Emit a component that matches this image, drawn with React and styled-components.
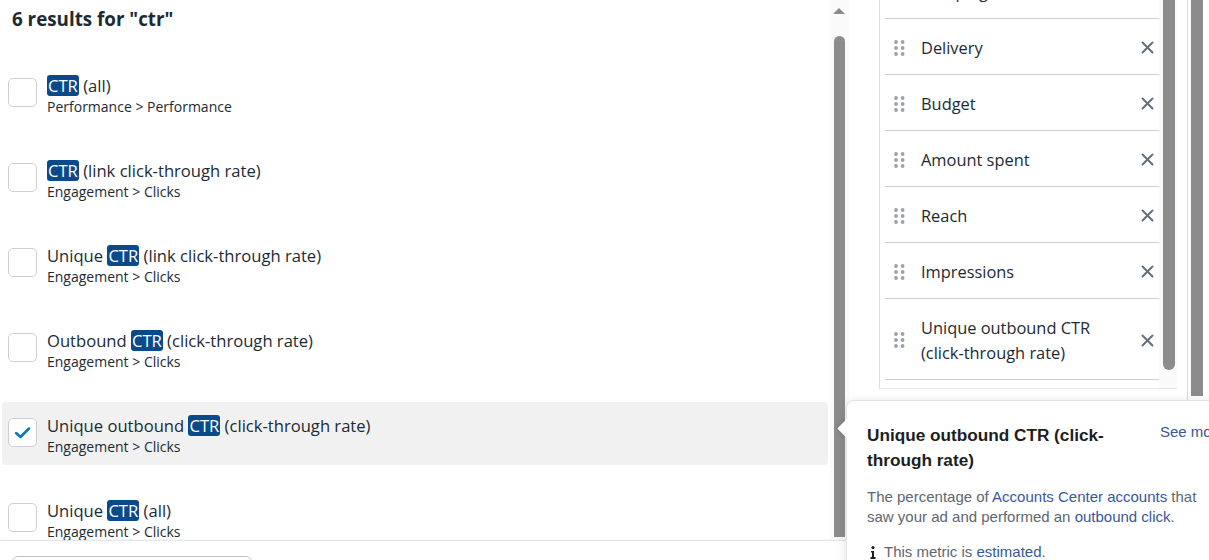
import styled, { createGlobalStyle } from "styled-components";

const GlobalStyle = createGlobalStyle`
  html, body {
    margin: 0;
    padding: 0;
    background: #fff;
    overflow: hidden;
  }
  body {
    font-family: "Open Sans", "Noto Sans", sans-serif;
    color: #1c2b33;
  }
`;

const results = [
  { pre: "", post: " (all)", path: "Performance > Performance" },
  { pre: "", post: " (link click-through rate)", path: "Engagement > Clicks" },
  { pre: "Unique ", post: " (link click-through rate)", path: "Engagement > Clicks" },
  { pre: "Outbound ", post: " (click-through rate)", path: "Engagement > Clicks" },
  { pre: "Unique outbound ", post: " (click-through rate)", path: "Engagement > Clicks", checked: true },
  { pre: "Unique ", post: " (all)", path: "Engagement > Clicks" },
];

const columns = [
  "Campaign name",
  "Delivery",
  "Budget",
  "Amount spent",
  "Reach",
  "Impressions",
  "Unique outbound CTR (click-through rate)",
];

function DragHandle() {
  return (
    <svg width="11" height="16" viewBox="0 0 11 16">
      {[2, 8, 14].map((cy) => (
        <g key={cy} fill="#9ba1a9">
          <circle cx="2" cy={cy} r="1.9" />
          <circle cx="8.6" cy={cy} r="1.9" />
        </g>
      ))}
    </svg>
  );
}

function CloseIcon() {
  return (
    <svg width="13" height="13" viewBox="0 0 13 13">
      <path d="M1.5 1.5 L11.5 11.5 M11.5 1.5 L1.5 11.5" stroke="#65707a" strokeWidth="2" strokeLinecap="round" />
    </svg>
  );
}

function CheckIcon() {
  return (
    <svg width="17" height="13" viewBox="0 0 17 13">
      <path d="M2 7 L6.5 11 L15 2.5" fill="none" stroke="#0a78be" strokeWidth="2.5" strokeLinecap="round" strokeLinejoin="round" />
    </svg>
  );
}

function InfoGlyph() {
  return (
    <svg width="6" height="13" viewBox="0 0 6 13">
      <circle cx="3" cy="1.6" r="1.6" fill="#1c1e21" />
      <path d="M1 5 H4 V11 H5.5 V13 H0.5 V11 H2 V6.6 H1 Z" fill="#1c1e21" />
    </svg>
  );
}

export default function App() {
  return (
    <>
      <GlobalStyle />
      <Page>
        <LeftPanel>
          <LeftBody>
            <ResultsColumn>
              <Heading>6 results for "ctr"</Heading>
              <ResultList>
                {results.map((r, i) => (
                  <ResultRow key={i} $selected={r.checked}>
                    <Checkbox>{r.checked && <CheckIcon />}</Checkbox>
                    <ResultText>
                      <ResultTitle>
                        {r.pre}
                        <Match>CTR</Match>
                        {r.post}
                      </ResultTitle>
                      <ResultPath>{r.path}</ResultPath>
                    </ResultText>
                  </ResultRow>
                ))}
              </ResultList>
            </ResultsColumn>
            <ScrollTrack>
              <ScrollArrow />
              <ScrollThumb $top={36} $bottom={3} />
            </ScrollTrack>
          </LeftBody>
          <Footer>
            <OutlineButton />
          </Footer>
        </LeftPanel>

        <RightPanel>
          <ColumnBox>
            <ColumnList>
              {columns.map((c) => (
                <ColumnRow key={c}>
                  <HandleCell>
                    <DragHandle />
                  </HandleCell>
                  <ColumnName>{c}</ColumnName>
                  <RemoveButton>
                    <CloseIcon />
                  </RemoveButton>
                </ColumnRow>
              ))}
            </ColumnList>
            <ListTrack>
              <ListThumb />
            </ListTrack>
          </ColumnBox>
          <OuterDivider />
          <OuterThumb />
        </RightPanel>

        <Popover>
          <PopoverArrow />
          <PopoverHeader>
            <PopoverTitle>Unique outbound CTR (click-through rate)</PopoverTitle>
            <Link>See more</Link>
          </PopoverHeader>
          <PopoverBody>
            The percentage of <Link>Accounts Center accounts</Link> that saw your ad and
            performed an <Link>outbound click</Link>.
          </PopoverBody>
          <InfoLine>
            <InfoGlyph />
            <span>
              This metric is <Link>estimated</Link>.
            </span>
          </InfoLine>
        </Popover>
      </Page>
    </>
  );
}

const Page = styled.div`
  position: relative;
  display: flex;
  width: 1209px;
  height: 560px;
  overflow: hidden;
`;

const LeftPanel = styled.div`
  width: 849px;
  display: flex;
  flex-direction: column;
  height: 560px;
`;

const LeftBody = styled.div`
  flex: 1;
  display: flex;
  min-height: 0;
  overflow: hidden;
`;

const ResultsColumn = styled.div`
  width: 828px;
  padding-left: 2px;
  overflow: hidden;
`;

const Heading = styled.h2`
  margin: 0 0 31px;
  padding: 7px 0 0 10px;
  font-size: 18.8px;
  line-height: 24px;
  font-weight: 700;
  color: #1c2b33;
`;

const ResultList = styled.div`
  display: flex;
  flex-direction: column;
  gap: 22px;
`;

const ResultRow = styled.div`
  display: flex;
  align-items: flex-start;
  gap: 10px;
  height: 63px;
  box-sizing: border-box;
  padding: 13px 6px 0;
  border-radius: 4px;
  background: ${(p) => (p.$selected ? "#f1f1f1" : "transparent")};
`;

const Checkbox = styled.div`
  width: 29px;
  height: 29px;
  margin-top: 3px;
  box-sizing: border-box;
  border: 1px solid #ccd0d5;
  border-radius: 5px;
  background: #fff;
  display: flex;
  align-items: center;
  justify-content: center;
  flex-shrink: 0;
`;

const ResultText = styled.div`
  display: flex;
  flex-direction: column;
`;

const ResultTitle = styled.div`
  font-size: 16.6px;
  line-height: 22px;
  color: #1c2b33;
  white-space: nowrap;
`;

const Match = styled.span`
  display: inline-block;
  background: #0b4a8a;
  color: #fff;
  border-radius: 3px;
  padding: 0 1px;
  line-height: 21px;
`;

const ResultPath = styled.div`
  font-size: 14px;
  line-height: 20px;
  color: #1c2b33;
`;

const ScrollTrack = styled.div`
  width: 19px;
  margin-left: 2px;
  background: #fafafa;
  display: flex;
  flex-direction: column;
  align-items: center;
  padding-top: 8px;
  box-sizing: border-box;
`;

const ScrollArrow = styled.div`
  width: 0;
  height: 0;
  border-left: 6px solid transparent;
  border-right: 6px solid transparent;
  border-bottom: 6px solid #8c8c8c;
  margin-left: -1px;
`;

const ScrollThumb = styled.div`
  width: 11px;
  flex: 1;
  margin: ${(p) => p.$top - 14}px 0 ${(p) => p.$bottom}px -1px;
  background: #8c8c8c;
  border-radius: 6px 6px 0 0;
`;

const Footer = styled.div`
  height: 20px;
  border-top: 1px solid #e4e6eb;
  box-shadow: 0 -1px 3px rgba(0, 0, 0, 0.04);
  padding: 15px 0 0 12px;
  box-sizing: border-box;
  background: #fff;
`;

const OutlineButton = styled.div`
  width: 240px;
  height: 36px;
  box-sizing: border-box;
  border: 1px solid #bec3c9;
  border-radius: 6px;
`;

const RightPanel = styled.div`
  flex: 1;
  display: flex;
  align-items: flex-start;
  padding-left: 30px;
`;

const ColumnBox = styled.div`
  display: flex;
  width: 298px;
  height: 389px;
  border-left: 1px solid #dadde1;
  border-bottom: 1px solid #e4e6eb;
  box-sizing: border-box;
  overflow: hidden;
`;

const ColumnList = styled.div`
  width: 275px;
  padding-left: 5px;
  margin-top: -37px;
`;

const ColumnRow = styled.div`
  display: flex;
  align-items: center;
  min-height: 56px;
  padding: 16px 0 14px;
  box-sizing: border-box;
  border-bottom: 1px solid #ccd0d5;
`;

const HandleCell = styled.div`
  width: 36px;
  display: flex;
  padding-left: 9px;
  box-sizing: border-box;
  flex-shrink: 0;
`;

const ColumnName = styled.div`
  flex: 1;
  font-size: 16.4px;
  line-height: 25px;
  color: #1c2b33;
  padding-right: 20px;
`;

const RemoveButton = styled.div`
  width: 13px;
  display: flex;
  margin-right: 5px;
  flex-shrink: 0;
`;

const ListTrack = styled.div`
  width: 18px;
  background: #fafafa;
  display: flex;
  justify-content: center;
`;

const ListThumb = styled.div`
  width: 12px;
  height: 370px;
  background: #8c8c8c;
  border-radius: 0 0 6px 6px;
  margin-left: 2px;
`;

const OuterDivider = styled.div`
  width: 1px;
  height: 400px;
  background: #dadde1;
  margin-left: 10px;
`;

const OuterThumb = styled.div`
  width: 12px;
  height: 396px;
  background: #8c8c8c;
  margin-left: 3px;
`;

const Popover = styled.div`
  position: absolute;
  left: 846px;
  top: 400px;
  width: 400px;
  height: 200px;
  box-sizing: border-box;
  padding: 22px 20px 0;
  background: #fff;
  border: 1px solid #e1e3e6;
  border-radius: 8px;
  box-shadow: 0 2px 12px rgba(0, 0, 0, 0.12);
  font-family: "Liberation Sans", Arial, sans-serif;
`;

const PopoverArrow = styled.div`
  position: absolute;
  left: -7px;
  top: 21px;
  width: 13px;
  height: 13px;
  background: #fff;
  transform: rotate(45deg);
  box-shadow: -2px 2px 3px rgba(0, 0, 0, 0.06);
`;

const PopoverHeader = styled.div`
  display: flex;
  align-items: flex-start;
`;

const PopoverTitle = styled.div`
  width: 280px;
  margin-right: 15px;
  font-size: 17.2px;
  line-height: 25px;
  font-weight: 700;
  color: #1c1e21;
`;

const Link = styled.span`
  color: #385898;
  font-size: 15px;
  white-space: nowrap;
`;

const PopoverBody = styled.div`
  width: 340px;
  margin-top: 14px;
  font-size: 15px;
  line-height: 20px;
  color: #606770;
`;

const InfoLine = styled.div`
  display: flex;
  align-items: center;
  gap: 8px;
  margin-top: 15px;
  padding-left: 3px;
  font-size: 15px;
  line-height: 20px;
  color: #606770;
`;
